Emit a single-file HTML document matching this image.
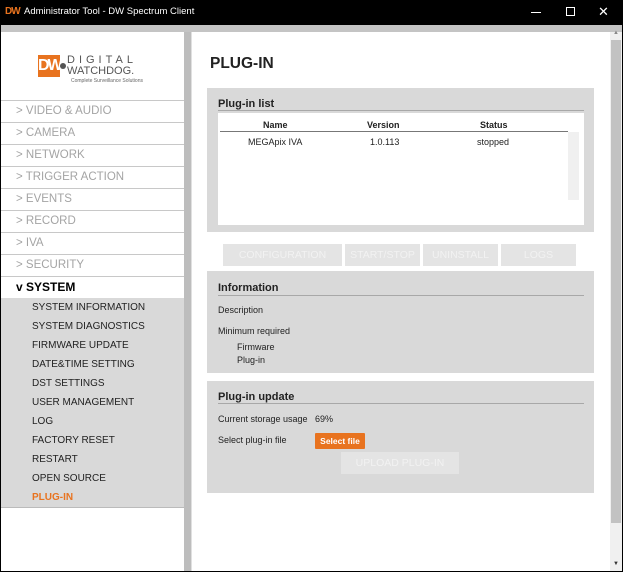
<!DOCTYPE html>
<html><head><meta charset="utf-8"><style>
*{margin:0;padding:0;box-sizing:border-box}
body{width:623px;height:572px;overflow:hidden;background:#000;font-family:"Liberation Sans",Arial,sans-serif;position:relative}
.abs{position:absolute}
.title{left:0;top:0;width:623px;height:25px;background:#000;color:#fff;font-size:12px}
.topband{left:1px;top:25px;width:621px;height:7px;background:#c4c4c4}
.left{left:1px;top:32px;width:183px;height:539px;background:#fff}
.sep{left:184px;top:32px;width:8px;height:539px;background:#bdbdbd;border-right:1px solid #e0e0e0}
.main{left:192px;top:32px;width:418px;height:539px;background:#fff}
.sb{left:610px;top:32px;width:12px;height:539px;background:#f0f0f0}
.nav{left:1px;width:183px;height:22px;border-top:1px solid #c8c8c8;color:#a4a4a4;font-size:11.5px;line-height:21px;padding-left:15px}
.sub{left:1px;width:183px;height:19px;background:#d9d9d9;color:#222;font-size:10px;line-height:19px;padding-left:31px}
.box{background:#d9d9d9;left:207px;width:387px}
.h{font-size:11px;font-weight:bold;color:#222;position:absolute;left:11px}
.hl{position:absolute;left:11px;right:10px;height:1px;background:#a8a8a8}
.t{font-size:9px;color:#222;position:absolute}
.btn{background:#e4e4e4;color:#f2f2f2;font-size:10.5px;text-align:center;line-height:22px;position:absolute;top:244px;height:22px}
</style></head><body>
<div class="abs title">
 <span class="abs" style="left:5px;top:6px;font-weight:bold;color:#e8731f;font-size:10px;letter-spacing:-1px">DW</span>
 <span class="abs" style="left:24px;top:6px;font-size:9.5px">Administrator Tool - DW Spectrum Client</span>
 <div class="abs" style="left:531px;top:12px;width:10px;height:1px;background:#fff"></div>
 <div class="abs" style="left:566px;top:7px;width:9px;height:9px;border:1px solid #fff"></div>
 <span class="abs" style="left:598px;top:4px;font-size:13px">✕</span>
</div>
<div class="abs topband"></div>
<div class="abs left"></div>
<div class="abs sep"></div>
<div class="abs main"></div>
<div class="abs sb"><div class="abs" style="left:1px;top:8px;width:10px;height:483px;background:#c2c2c2"></div>
<div class="abs" style="left:3px;top:-2px;font-size:6px;color:#888">▲</div><div class="abs" style="left:3px;top:529px;font-size:6px;color:#333">▼</div></div>

<!-- logo -->
<div class="abs" style="left:38px;top:55px;width:22px;height:22px;background:#e8731f;color:#fff;font-weight:bold;font-size:16px;line-height:22px;letter-spacing:-2px">DW</div>
<div class="abs" style="left:60px;top:63px;width:6px;height:6px;border-radius:50%;background:#555"></div>
<div class="abs" style="left:67px;top:54px;font-size:11px;letter-spacing:4px;color:#555">DIGITAL</div>
<div class="abs" style="left:67px;top:65px;font-size:11px;color:#555">WATCHDOG.</div>
<div class="abs" style="left:71px;top:78px;font-size:5px;color:#666">Complete Surveillance Solutions</div>

<div class="abs nav" style="top:100px">&gt; VIDEO &amp; AUDIO</div>
<div class="abs nav" style="top:122px">&gt; CAMERA</div>
<div class="abs nav" style="top:144px">&gt; NETWORK</div>
<div class="abs nav" style="top:166px">&gt; TRIGGER ACTION</div>
<div class="abs nav" style="top:188px">&gt; EVENTS</div>
<div class="abs nav" style="top:210px">&gt; RECORD</div>
<div class="abs nav" style="top:232px">&gt; IVA</div>
<div class="abs nav" style="top:254px">&gt; SECURITY</div>
<div class="abs nav" style="top:276px;color:#000;font-weight:bold;font-size:12px">v SYSTEM</div>
<div class="abs sub" style="top:298px">SYSTEM INFORMATION</div>
<div class="abs sub" style="top:317px">SYSTEM DIAGNOSTICS</div>
<div class="abs sub" style="top:336px">FIRMWARE UPDATE</div>
<div class="abs sub" style="top:355px">DATE&amp;TIME SETTING</div>
<div class="abs sub" style="top:374px">DST SETTINGS</div>
<div class="abs sub" style="top:393px">USER MANAGEMENT</div>
<div class="abs sub" style="top:412px">LOG</div>
<div class="abs sub" style="top:431px">FACTORY RESET</div>
<div class="abs sub" style="top:450px">RESTART</div>
<div class="abs sub" style="top:469px">OPEN SOURCE</div>
<div class="abs sub" style="top:488px;color:#e8731f;font-weight:bold;height:19px">PLUG-IN</div>
<div class="abs" style="left:1px;top:507px;width:183px;height:1px;background:#bbb"></div>

<div class="abs" style="left:210px;top:55px;font-size:15.5px;font-weight:bold;color:#222">PLUG-IN</div>

<div class="abs box" style="top:88px;height:144px">
 <div class="h" style="top:10px">Plug-in list</div><div class="hl" style="top:22px"></div>
 <div class="abs" style="left:11px;top:25px;width:366px;height:112px;background:#fff">
  <div class="t" style="left:45px;top:7px;font-weight:bold">Name</div>
  <div class="t" style="left:149px;top:7px;font-weight:bold">Version</div>
  <div class="t" style="left:262px;top:7px;font-weight:bold">Status</div>
  <div class="abs" style="left:2px;top:18px;width:348px;height:1px;background:#777"></div>
  <div class="t" style="left:30px;top:24px">MEGApix IVA</div>
  <div class="t" style="left:152px;top:24px">1.0.113</div>
  <div class="t" style="left:259px;top:24px">stopped</div>
  <div class="abs" style="left:350px;top:19px;width:11px;height:68px;background:#f0f0f0"></div>
 </div>
</div>
<div class="btn" style="left:223px;width:119px">CONFIGURATION</div>
<div class="btn" style="left:345px;width:75px">START/STOP</div>
<div class="btn" style="left:423px;width:75px">UNINSTALL</div>
<div class="btn" style="left:501px;width:75px">LOGS</div>

<div class="abs box" style="top:271px;height:102px">
 <div class="h" style="top:11px">Information</div><div class="hl" style="top:24px"></div>
 <div class="t" style="left:11px;top:34px">Description</div>
 <div class="t" style="left:11px;top:55px">Minimum required</div>
 <div class="t" style="left:30px;top:71px">Firmware</div>
 <div class="t" style="left:30px;top:84px">Plug-in</div>
</div>
<div class="abs box" style="top:381px;height:112px">
 <div class="h" style="top:10px">Plug-in update</div><div class="hl" style="top:22px"></div>
 <div class="t" style="left:11px;top:33px">Current storage usage</div>
 <div class="t" style="left:108px;top:33px">69%</div>
 <div class="t" style="left:11px;top:54px">Select plug-in file</div>
 <div class="abs" style="left:108px;top:52px;width:50px;height:16px;background:#e8731f;color:#fff;font-size:8.5px;font-weight:bold;text-align:center;line-height:16px;border-radius:1px">Select file</div>
 <div class="abs" style="left:134px;top:71px;width:118px;height:22px;background:#e4e4e4;color:#f2f2f2;font-size:10.5px;text-align:center;line-height:22px">UPLOAD PLUG-IN</div>
</div>
</body></html>
